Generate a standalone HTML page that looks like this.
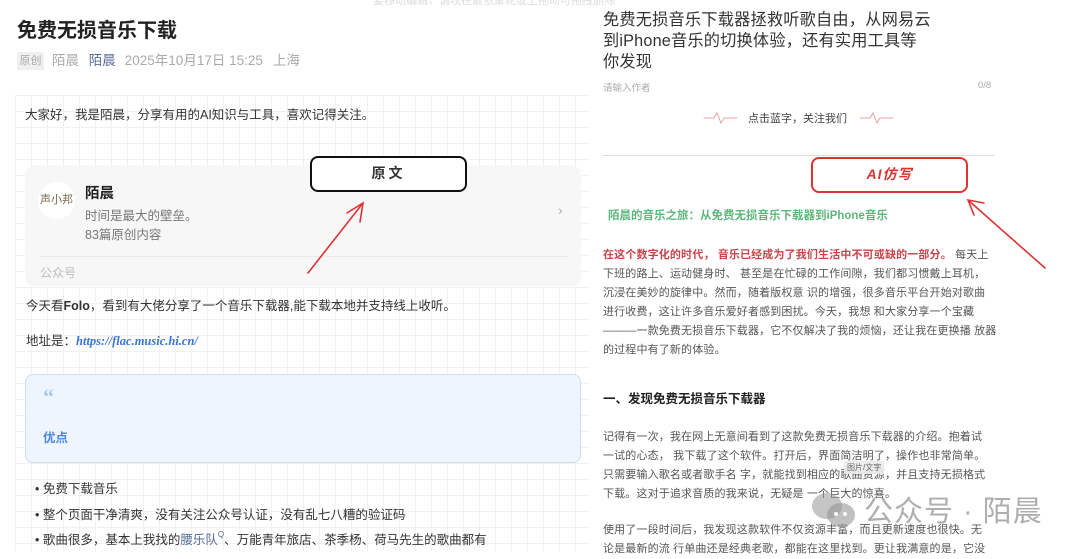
<!DOCTYPE html>
<html><head><meta charset="utf-8"><style>
*{margin:0;padding:0;box-sizing:border-box}
body{width:1080px;height:551px;overflow:hidden;background:#fff;position:relative;font-family:"Liberation Sans","Noto Sans CJK SC",sans-serif;color:#333}
.a{position:absolute;white-space:nowrap}
.grid{position:absolute;left:15px;top:95px;width:575px;height:456px;background-image:linear-gradient(#f1f1f1 1px,transparent 1px),linear-gradient(90deg,#f1f1f1 1px,transparent 1px);background-size:16px 16px}
.rp{position:absolute;left:603px;font-size:11px;line-height:19px;color:#555;letter-spacing:0.15px;white-space:nowrap}
</style></head><body>
<div class="a" style="left:373px;top:-8px;font-size:11px;color:#ddd">要移动编辑，请攻在最依聚轮或上拖动可拖拽删除</div>
<div class="a" style="left:17px;top:14px;font-size:20px;font-weight:bold;color:#222">免费无损音乐下载</div>
<div class="a" style="left:17px;top:52px;width:27px;height:18px;background:#f0f0f0;font-size:11px;color:#aaa;line-height:18px;text-align:center">原创</div>
<div class="a" style="left:52px;top:52px;font-size:13.5px;color:#aaa;line-height:18px">陌晨 <span style="color:#576b95;margin-left:6px">陌晨</span><span style="margin-left:9px">2025年10月17日 15:25</span><span style="margin-left:10px">上海</span></div>
<div class="grid"></div>
<div class="a" style="left:25px;top:104px;font-size:12.5px;color:#333">大家好，我是陌晨，分享有用的AI知识与工具，喜欢记得关注。</div>
<div class="a" style="left:25px;top:165px;width:556px;height:121px;background:#f7f7f7;border-radius:10px"></div>
<div class="a" style="left:38px;top:182px;width:37px;height:37px;border-radius:50%;background:#fff;font-size:11px;color:#7a6a4a;line-height:37px;text-align:center">声小邦</div>
<div class="a" style="left:85px;top:182px;font-size:14.5px;font-weight:bold;color:#222">陌晨</div>
<div class="a" style="left:85px;top:205px;font-size:12.5px;color:#777">时间是最大的壁垒。</div>
<div class="a" style="left:85px;top:224px;font-size:12.5px;color:#777">83篇原创内容</div>
<div class="a" style="left:39px;top:256px;width:530px;height:1px;background:#ebebeb"></div>
<div class="a" style="left:40px;top:264px;font-size:12px;color:#bbb">公众号</div>
<div class="a" style="left:558px;top:202px;font-size:14px;color:#aaa">›</div>
<div class="a" style="left:310px;top:156px;width:157px;height:36px;border:2px solid #111;border-radius:8px;background:#fff;text-align:center;font-size:14px;font-weight:bold;line-height:31px;letter-spacing:3px">原文</div>
<svg class="a" style="left:0;top:0" width="1080" height="551">
<g stroke="#d33" stroke-width="1.6" fill="none" stroke-linecap="round">
<path d="M308 273 L363 203 M347 213 L363 203 L360 222"/>
<path d="M1045 268 L968 200 M984 203 L968 200 L974 215"/>
<path d="M704 118h10l3-5 4 10 3-5h13M860 118h10l3-5 4 10 3-5h13" stroke="#e9a0a0" stroke-width="1"/>
</g></svg>
<div class="a" style="left:26px;top:295px;font-size:12.5px">今天看<b>Folo</b>，看到有大佬分享了一个音乐下载器,能下载本地并支持线上收听。</div>
<div class="a" style="left:26px;top:330px;font-size:12.5px">地址是：<i style="color:#3a73d9;font-weight:bold;font-family:'Liberation Serif',serif">https://flac.music.hi.cn/</i></div>
<div class="a" style="left:25px;top:374px;width:556px;height:89px;background:#eef5fe;border:1px solid #c9def7;border-radius:8px"></div>
<div class="a" style="left:43px;top:384px;font-size:22px;font-weight:bold;color:#a9c9f2;font-family:'Liberation Serif',serif">“</div>
<div class="a" style="left:43px;top:427px;font-size:12.5px;font-weight:bold;color:#4a86e0">优点</div>
<div class="a" style="left:35px;top:477px;font-size:12.5px;line-height:25.5px;color:#333">
<div style="height:25.5px">• 免费下载音乐</div><div style="height:25.5px">• 整个页面干净清爽，没有关注公众号认证，没有乱七八糟的验证码</div><div style="height:25.5px">• 歌曲很多，基本上我找的<span style="color:#576b95">腰乐队</span><span style="color:#576b95;font-size:8px;vertical-align:top;line-height:14px">Q</span>、万能青年旅店、茶季杨、荷马先生的歌曲都有</div></div>

<div class="a" style="left:603px;top:10px;font-size:16.2px;line-height:21px;color:#333;letter-spacing:0.2px">免费无损音乐下载器拯救听歌自由，从网易云<br>到iPhone音乐的切换体验，还有实用工具等<br>你发现</div>
<div class="a" style="left:603px;top:80px;font-size:9.5px;color:#aaa">请输入作者</div>
<div class="a" style="left:978px;top:80px;font-size:9.5px;color:#aaa">0/8</div>
<div class="a" style="left:748px;top:110px;font-size:11px;color:#444">点击蓝字，关注我们</div>
<div class="a" style="left:602px;top:155px;width:393px;height:1px;background:#edd6d6"></div>
<div class="a" style="left:811px;top:157px;width:157px;height:36px;border:2px solid #d33;border-radius:8px;background:#fff;text-align:center;font-size:14px;font-weight:bold;line-height:31px;color:#d33;font-style:italic;letter-spacing:1px">AI仿写</div>
<div class="a" style="left:608px;top:207px;font-size:11.5px;font-weight:bold;color:#5cb87a">陌晨的音乐之旅：从免费无损音乐下载器到iPhone音乐</div>
<div class="rp" style="top:246px"><b style="color:#c9444a">在这个数字化的时代， 音乐已经成为了我们生活中不可或缺的一部分。</b> 每天上<br>下班的路上、运动健身时、 甚至是在忙碌的工作间隙，我们都习惯戴上耳机，<br>沉浸在美妙的旋律中。然而，随着版权意 识的增强，很多音乐平台开始对歌曲<br>进行收费，这让许多音乐爱好者感到困扰。今天，我想 和大家分享一个宝藏<br>———一款免费无损音乐下载器，它不仅解决了我的烦恼，还让我在更换播 放器<br>的过程中有了新的体验。</div>
<div class="a" style="left:603px;top:388px;font-size:12.5px;font-weight:bold;color:#222">一、发现免费无损音乐下载器</div>
<div class="rp" style="top:428px">记得有一次，我在网上无意间看到了这款免费无损音乐下载器的介绍。抱着试<br>一试的心态， 我下载了这个软件。打开后，界面简洁明了，操作也非常简单。<br>只需要输入歌名或者歌手名 字，就能找到相应的歌曲资源，并且支持无损格式<br>下载。这对于追求音质的我来说，无疑是 一个巨大的惊喜。</div>
<div class="rp" style="top:521px">使用了一段时间后，我发现这款软件不仅资源丰富，而且更新速度也很快。无<br>论是最新的流 行单曲还是经典老歌，都能在这里找到。更让我满意的是，它没</div>
<div class="a" style="left:844px;top:461px;font-size:8px;color:#666;background:rgba(235,235,235,0.9);padding:1px 3px">图片/文字</div>
<svg class="a" style="left:810px;top:490px" width="48" height="40"><ellipse cx="17" cy="16" rx="15" ry="13" fill="rgba(150,150,150,0.55)"/><ellipse cx="31" cy="25" rx="14" ry="12" fill="rgba(150,150,150,0.6)"/><circle cx="26" cy="24" r="2" fill="#fff"/><circle cx="35" cy="24" r="2" fill="#fff"/></svg>
<div class="a" style="left:864px;top:488px;font-size:29px;color:rgba(140,140,140,0.7);letter-spacing:1px">公众号 · 陌晨</div>
</body></html>
